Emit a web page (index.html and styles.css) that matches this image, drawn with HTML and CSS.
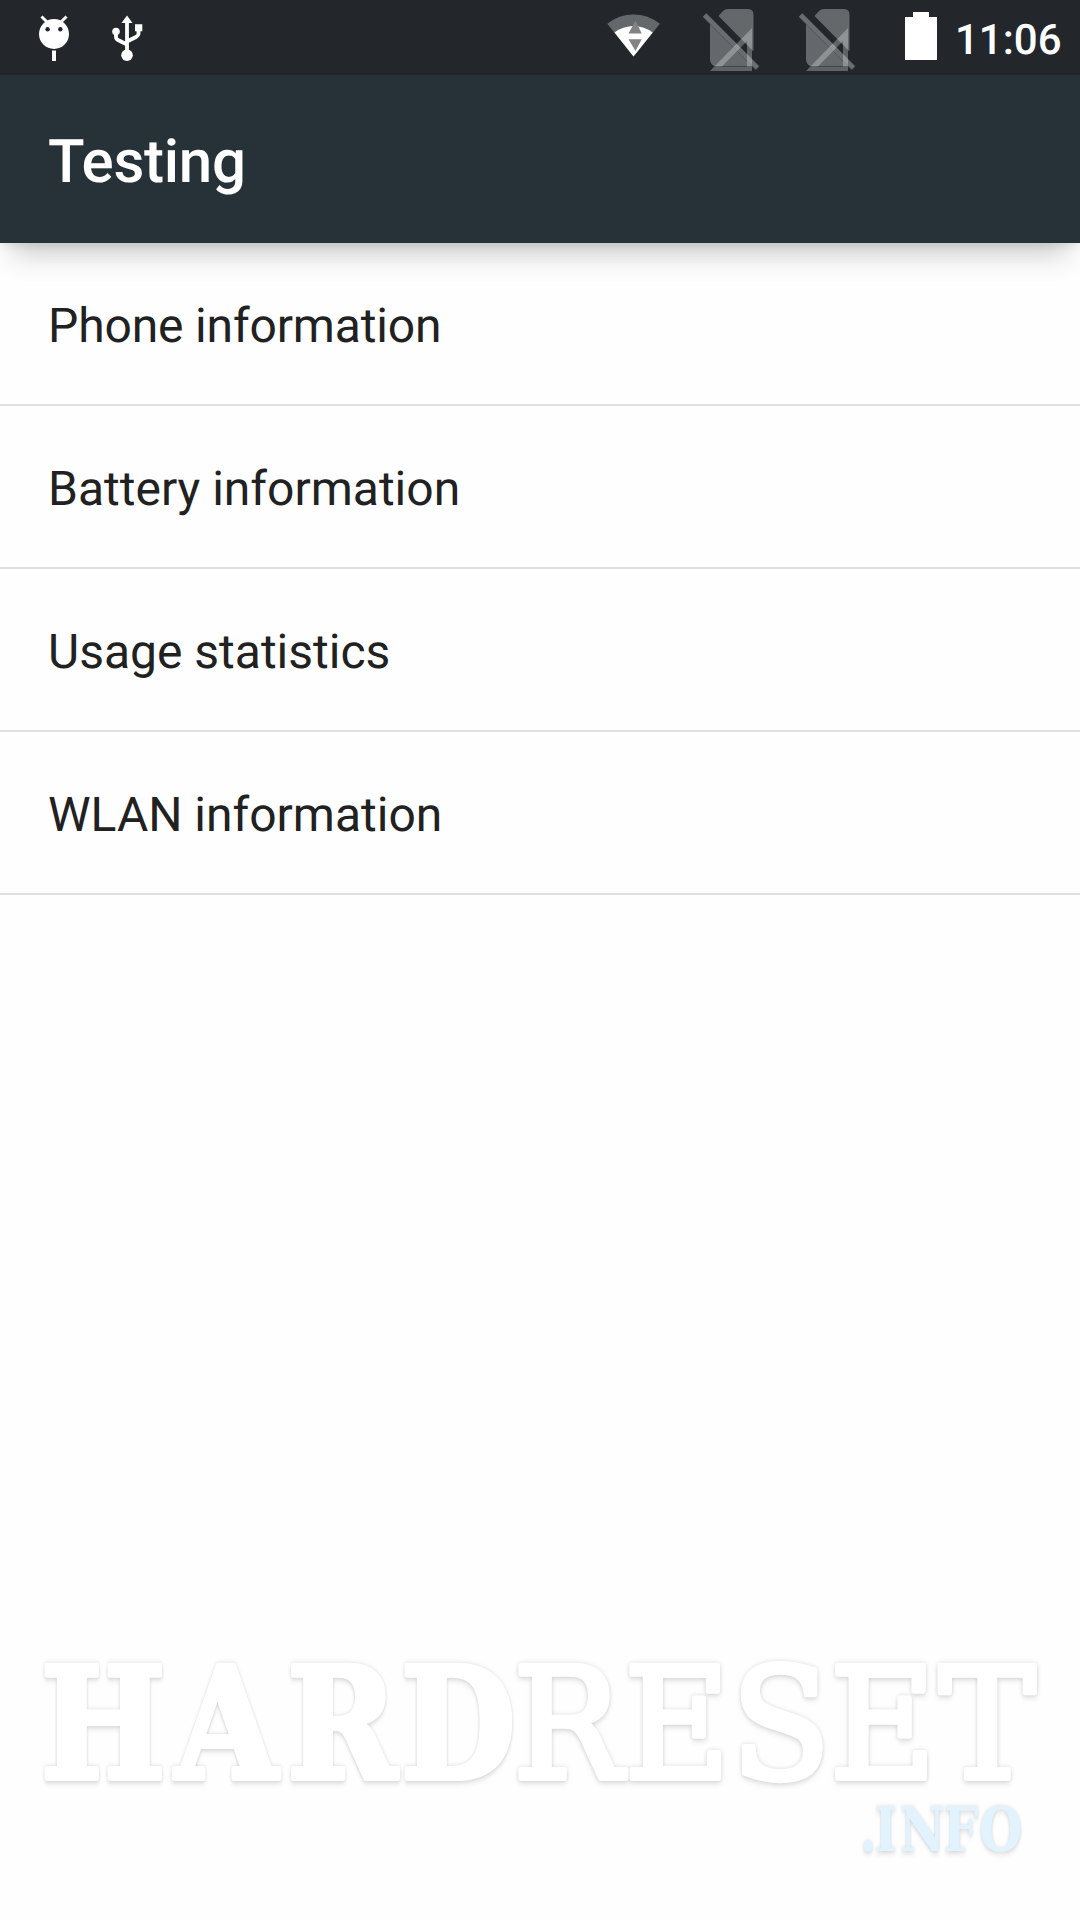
FILE: index.html
```html
<!DOCTYPE html>
<html lang="en">
<head>
<meta charset="utf-8">
<title>Testing</title>
<link rel="stylesheet" href="styles.css">
</head>
<body>
<div class="screen">
  <div class="status-bar">
    <svg class="status-icons" viewBox="0 0 940 75" width="940" height="75" aria-hidden="true">
      <!-- debug mascot -->
      <g>
        <circle class="solid" cx="54" cy="34" r="15"/>
        <path class="line" stroke-width="3" d="M41.5 16.500L47 22M66.500 16.500L61 22"/>
        <circle class="cutout" cx="47.600" cy="29.300" r="2.200"/>
        <circle class="cutout" cx="60.300" cy="29.300" r="2.200"/>
        <path class="solid" d="M52 50.500H56V61H52Z"/>
      </g>
      <!-- usb -->
      <g>
        <path class="line" stroke-width="3.800" d="M127 55V21M116 32V37Q116 39 118 40L127 44.500M138.500 28V34Q138.500 35.500 136 37L127 41.500"/>
        <path class="solid" d="M127 15.500L132.500 23H121.500ZM135 24.200H142.300V31.300H135Z"/>
        <circle class="solid" cx="116" cy="31.500" r="3.800"/>
        <circle class="solid" cx="127" cy="55.200" r="5.800"/>
      </g>
      <!-- wifi -->
      <g>
        <path class="wifi-back" d="M633.500 56.500L607.300 23.800Q619 14.500 633.500 14.500T659.900 23.800Z"/>
        <path class="solid" d="M633.500 56.500L614.500 32.500Q623 26 633.500 26T652.700 32.500Z"/>
        <path class="wifi-arrow" d="M635.500 20.500L641.700 33.500H628.500ZM628.500 39.300H641.700L635.500 51Z"/>
      </g>
      <!-- empty sim slots -->
      <g>
        <path class="sim-body" d="M718.500 16L723 11Q725 9 728 9H748Q753.500 9 753.500 15V51.500ZM710 24L752 66H714Q710 64 710 59Z"/>
        <path class="sim-slash" d="M704.500 15L757.500 68"/>
        <path class="sim-signal" d="M752 28V71H710ZM747 41V66.500H722Z"/>
      </g>
      <g transform="translate(96 0)">
        <path class="sim-body" d="M718.500 16L723 11Q725 9 728 9H748Q753.500 9 753.500 15V51.500ZM710 24L752 66H714Q710 64 710 59Z"/>
        <path class="sim-slash" d="M704.500 15L757.500 68"/>
        <path class="sim-signal" d="M752 28V71H710ZM747 41V66.500H722Z"/>
      </g>
      <!-- battery -->
      <path class="solid" d="M913 12H929V17H937V60H905V17H913Z"/>
    </svg>
    <span class="clock">11:06</span>
  </div>
  <header class="app-bar"><h1 class="title">Testing</h1></header>
  <ul class="menu">
    <li class="menu-item menu-item-tight">Phone information</li>
    <li class="menu-item">Battery information</li>
    <li class="menu-item">Usage statistics</li>
    <li class="menu-item">WLAN information</li>
  </ul>
  <footer class="watermark">
    <svg viewBox="0 1600 1080 320" width="1080" height="320">
      <text class="brand brand-bold" transform="scale(.855 1)" x="48 205 336 469" y="1778">HARD</text>
      <text class="brand" transform="scale(.94 1)" x="546 664 778 883 999" y="1778">RESET</text>
      <text class="domain" transform="scale(.82 1)" x="1048 1066 1097 1150 1194" y="1850.500">.INFO</text>
    </svg>
  </footer>
</div>
</body>
</html>
```
FILE: styles.css
```css
body {
  margin: 0;
  background: #fefefe;
  font-family: Roboto, "Noto Sans", sans-serif;
  text-rendering: geometricPrecision;
}

.screen {
  display: flex;
  flex-direction: column;
  height: 1920px;
  overflow: hidden;
}

.status-bar {
  display: flex;
  flex: none;
  height: 75px;
  background: #23272b;
  color: #fff;
}

.status-icons {
  flex: none;
}

.solid { fill: #fff; }
.cutout { fill: #23272b; }
.line { fill: none; stroke: #fff; }
.wifi-back { fill: #65686b; }
.wifi-arrow { fill: #808284; }
.sim-body { fill: #65686b; }
.sim-slash { fill: none; stroke: #6a6d70; stroke-width: 5; }
.sim-signal { fill: #fff; fill-opacity: .28; fill-rule: evenodd; }

.clock {
  padding: 4px 0 0 15px;
  font-size: 42px;
  font-weight: 500;
  line-height: 73px;
}

.app-bar {
  display: flex;
  flex: none;
  align-items: center;
  height: 168px;
  padding: 0 48px;
  box-sizing: border-box;
  background: #273238;
  box-shadow: 0 24px 26px -12px rgba(0, 0, 0, .19), 0 4px 10px -2px rgba(0, 0, 0, .1);
}

.title {
  margin: 0;
  padding-top: 6px;
  color: #fff;
  font-size: 60px;
  font-weight: 500;
  letter-spacing: -.25px;
  line-height: 70px;
}

.menu {
  flex: 1;
  margin: 0;
  padding: 0;
  list-style: none;
}

.menu-item {
  height: 157px;
  padding: 4px 48px 0;
  border-bottom: 2px solid #e0e0e0;
  color: #212121;
  font-size: 48px;
  line-height: 158px;
}

.menu-item-tight {
  letter-spacing: -.15px;
}

.watermark {
  flex: none;
  height: 320px;
}

.brand,
.domain {
  font-family: "DejaVu Serif", serif;
  filter: drop-shadow(0 0 2px rgba(0, 0, 0, .14)) drop-shadow(0 4px 2px rgba(0, 0, 0, .07));
}

.brand {
  fill: #fff;
  stroke: #fff;
  stroke-width: 6px;
  stroke-linejoin: round;
  font-size: 154px;
}

.brand-bold {
  font-weight: 700;
}

.domain {
  fill: #e0f3ff;
  font-size: 61px;
  font-weight: 700;
}
```
